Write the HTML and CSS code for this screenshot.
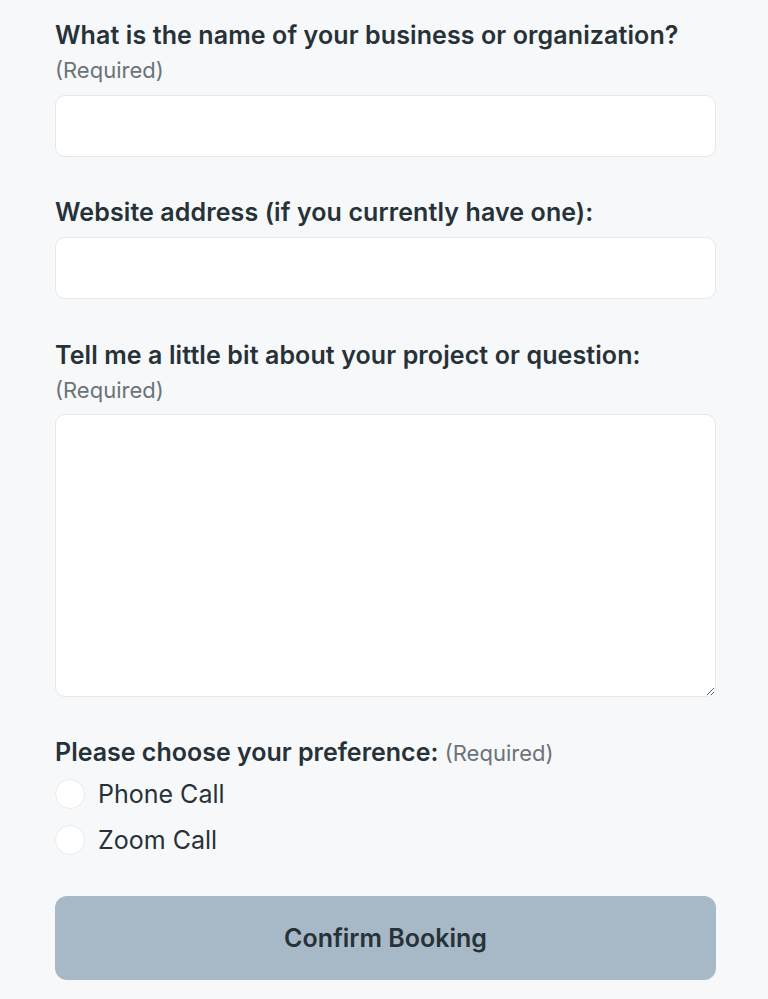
FILE: index.html
```html
<!DOCTYPE html>
<html lang="en">
<head>
<meta charset="utf-8">
<title>Booking form</title>
<link rel="stylesheet" href="styles.css">
</head>
<body>
<form class="form">
  <div class="field">
    <label class="label" for="biz">What is the name of your business or organization?</label>
    <span class="req req-block">(Required)</span>
    <input class="input" id="biz" type="text">
  </div>
  <div class="field">
    <label class="label" for="site">Website address (if you currently have one):</label>
    <input class="input" id="site" type="text">
  </div>
  <div class="field">
    <label class="label" for="proj">Tell me a little bit about your project or question:</label>
    <span class="req req-block">(Required)</span>
    <textarea class="textarea" id="proj"></textarea>
  </div>
  <div class="field field-radio">
    <div class="label label-inline">Please choose your preference: <span class="req">(Required)</span></div>
    <label class="radio"><input type="radio" name="pref"><span class="dot"></span>Phone Call</label>
    <label class="radio"><input type="radio" name="pref"><span class="dot"></span>Zoom Call</label>
  </div>
  <button class="btn" type="button">Confirm Booking</button>
</form>
</body>
</html>
```

FILE: styles.css
```css
* { box-sizing: border-box; }
html, body { margin: 0; background: #f7f8fa; }
body {
  font-family: Inter, "Noto Sans", sans-serif;
  color: #263238;
}
.form {
  padding: 20px 52px 0 55px;
  display: flex;
  flex-direction: column;
}
.field {
  display: flex;
  flex-direction: column;
  margin-bottom: 40px;
}
.label {
  font-size: 25px;
  font-weight: 600;
  line-height: 30px;
  letter-spacing: 0.1px;
  white-space: nowrap;
}
.label-inline { letter-spacing: 0; }
.req {
  font-size: 22px;
  font-weight: 400;
  letter-spacing: 0;
  color: #6b7378;
}
.req-block {
  line-height: 30px;
  margin-top: 5px;
}
.input {
  margin-top: 10px;
  height: 62px;
  border: 1.5px solid #e5e8eb;
  border-radius: 10px;
  background: #fff;
  font: inherit;
  padding: 0 16px;
  outline: none;
}
.field:nth-child(2) { margin-bottom: 41px; }
.textarea {
  margin-top: 9px;
  height: 283px;
  border: 1.5px solid #e5e8eb;
  border-radius: 10px;
  background: #fff;
  font: inherit;
  padding: 12px 16px;
  resize: vertical;
  outline: none;
}
.field-radio { margin-bottom: 33px; }
.field-radio .label { margin-bottom: 3px; }
.radio {
  display: flex;
  align-items: center;
  gap: 13px;
  font-size: 25px;
  height: 46px;
  color: #263238;
}
.radio input { display: none; }
.dot {
  width: 30px;
  height: 30px;
  border-radius: 50%;
  background: #fff;
  border: 1.5px solid #e8ebee;
}
.btn {
  height: 84px;
  border: none;
  border-radius: 12px;
  background: #a7b8c6;
  color: #263238;
  font-family: Inter, "Noto Sans", sans-serif;
  font-size: 25px;
  font-weight: 600;
}
```
